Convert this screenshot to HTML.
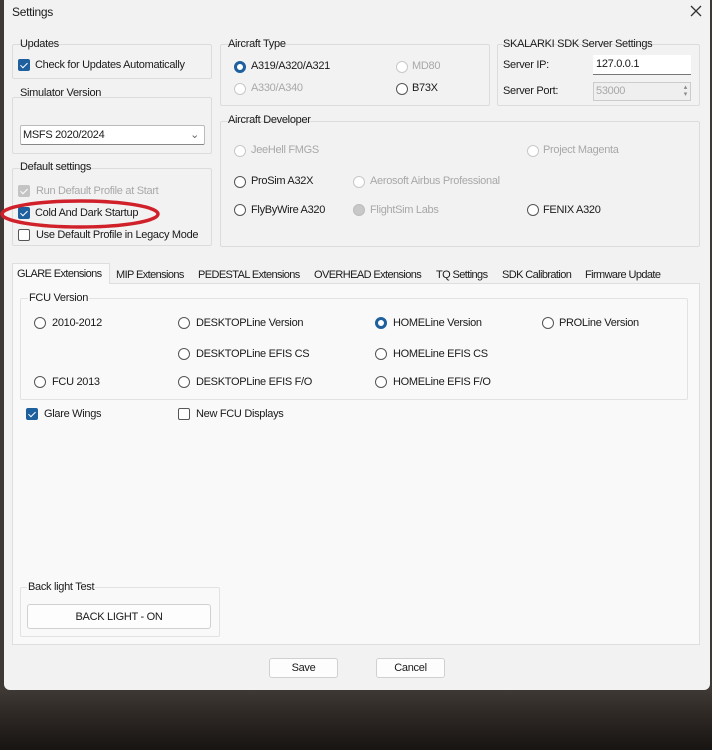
<!DOCTYPE html>
<html><head><meta charset="utf-8"><style>
*{margin:0;padding:0;box-sizing:border-box}
body{width:712px;height:750px;overflow:hidden;background:linear-gradient(180deg,#3f3935 690px,#2e2825 715px,#171412 750px);font-family:"Liberation Sans",sans-serif;font-size:11px;color:#1a1a1a;position:relative;letter-spacing:-0.3px}
.a{position:absolute;white-space:nowrap}
#dlg{position:absolute;left:4px;top:0;width:706px;height:690px;background:#f2f2f2;border-radius:0 0 6px 6px}
.g{position:absolute;border:1px solid #dcdcdc;border-radius:2px}
.dis{color:#a8a8a8}
.r{position:absolute;width:12px;height:12px;border:1px solid #555;border-radius:50%;background:#fff}
.r.on{border:3.5px solid #1e5f9e;background:#fff}
.r.d{border-color:#c8c8c8}
.r.dd{border-color:#bbb;background:#c8c8c8}
.c{position:absolute;width:12px;height:12px;border:1px solid #555;border-radius:2px;background:#fff}
.c.on{background:#1e5f9e;border-color:#1e5f9e}
.c.on::after,.c.gd::after{content:"";position:absolute;left:3px;top:0.5px;width:3px;height:6px;border:solid #fff;border-width:0 1.5px 1.5px 0;transform:rotate(45deg)}
.c.gd{background:#c4c4c4;border-color:#c4c4c4}
.btn{position:absolute;background:#fdfdfd;border:1px solid #d0d0d0;border-radius:3px;text-align:center}
.tab{letter-spacing:-0.6px}
</style></head><body>
<div id="dlg"></div>
<div class="a" style="left:12px;top:5px;font-size:12px">Settings</div>
<svg class="a" style="left:690px;top:5px" width="12" height="12"><path d="M1 1L11 11M11 1L1 11" stroke="#333" stroke-width="1.3"/></svg>

<div class="g" style="left:12px;top:44px;width:200px;height:35px"></div>
<div class="a" style="left:20px;top:38px">Updates</div>
<div class="c on" style="left:18px;top:59px"></div>
<div class="a" style="left:35px;top:59px">Check for Updates Automatically</div>

<div class="g" style="left:12px;top:97px;width:200px;height:57px"></div>
<div class="a" style="left:20px;top:87px">Simulator Version</div>
<div class="a" style="left:20px;top:125px;width:185px;height:20px;background:#fff;border:1px solid #bbb;border-bottom-color:#888;border-radius:2px;padding:3px 0 0 2px">MSFS 2020/2024<span style="position:absolute;right:5px;top:2px;color:#666">⌄</span></div>

<div class="g" style="left:12px;top:168px;width:200px;height:78px"></div>
<div class="a" style="left:20px;top:161px">Default settings</div>
<div class="c gd" style="left:18px;top:185px"></div>
<div class="a dis" style="left:36px;top:185px">Run Default Profile at Start</div>
<div class="c on" style="left:18px;top:207px"></div>
<div class="a" style="left:35px;top:207px">Cold And Dark Startup</div>
<div class="c" style="left:18px;top:229px"></div>
<div class="a" style="left:36px;top:229px">Use Default Profile in Legacy Mode</div>
<svg class="a" style="left:0;top:196px" width="170" height="40"><ellipse cx="80" cy="18" rx="78" ry="13" fill="none" stroke="#d0212b" stroke-width="3.5"/></svg>

<div class="g" style="left:220px;top:44px;width:270px;height:62px"></div>
<div class="a" style="left:228px;top:38px">Aircraft Type</div>
<div class="r on" style="left:234px;top:61px"></div><div class="a" style="left:251px;top:60px">A319/A320/A321</div>
<div class="r d" style="left:234px;top:83px"></div><div class="a dis" style="left:251px;top:82px">A330/A340</div>
<div class="r d" style="left:396px;top:61px"></div><div class="a dis" style="left:412px;top:60px">MD80</div>
<div class="r" style="left:396px;top:83px"></div><div class="a" style="left:412px;top:82px">B73X</div>

<div class="g" style="left:497px;top:44px;width:203px;height:62px"></div>
<div class="a" style="left:503px;top:38px">SKALARKI SDK Server Settings</div>
<div class="a" style="left:503px;top:59px">Server IP:</div>
<div class="a" style="left:593px;top:55px;width:98px;height:20px;background:#fff;border-bottom:1px solid #777;padding:3px 0 0 3px">127.0.0.1</div>
<div class="a" style="left:503px;top:85px">Server Port:</div>
<div class="a dis" style="left:593px;top:82px;width:98px;height:19px;background:#efefef;border:1px solid #ccc;padding:2px 0 0 2px">53000<span style="position:absolute;right:3px;top:1px;font-size:7px;line-height:7px;color:#888">▴<br>▾</span></div>

<div class="g" style="left:220px;top:121px;width:480px;height:126px"></div>
<div class="a" style="left:228px;top:114px">Aircraft Developer</div>
<div class="r d" style="left:234px;top:145px"></div><div class="a dis" style="left:251px;top:144px">JeeHell FMGS</div>
<div class="r d" style="left:527px;top:145px"></div><div class="a dis" style="left:543px;top:144px">Project Magenta</div>
<div class="r" style="left:234px;top:176px"></div><div class="a" style="left:251px;top:175px">ProSim A32X</div>
<div class="r d" style="left:353px;top:176px"></div><div class="a dis" style="left:370px;top:175px">Aerosoft Airbus Professional</div>
<div class="r" style="left:234px;top:204px"></div><div class="a" style="left:251px;top:204px">FlyByWire A320</div>
<div class="r dd" style="left:353px;top:204px"></div><div class="a dis" style="left:370px;top:204px">FlightSim Labs</div>
<div class="r" style="left:527px;top:204px"></div><div class="a" style="left:543px;top:204px">FENIX A320</div>

<div class="a" style="left:12px;top:283px;width:688px;height:362px;background:#f9f9f9;border:1px solid #dedede"></div>
<div class="a" style="left:12px;top:263px;width:98px;height:21px;background:#f9f9f9;border:1px solid #dedede;border-bottom:none"></div>
<div class="a tab" style="left:17px;top:268px">GLARE Extensions</div>
<div class="a tab" style="left:116px;top:269px">MIP Extensions</div>
<div class="a tab" style="left:198px;top:269px">PEDESTAL Extensions</div>
<div class="a tab" style="left:314px;top:269px">OVERHEAD Extensions</div>
<div class="a tab" style="left:436px;top:269px">TQ Settings</div>
<div class="a tab" style="left:502px;top:269px">SDK Calibration</div>
<div class="a tab" style="left:585px;top:269px">Firmware Update</div>

<div class="g" style="left:20px;top:298px;width:668px;height:102px;border-color:#e2e2e2"></div>
<div class="a" style="left:28px;top:292px;background:#f9f9f9;padding:0 1px">FCU Version</div>
<div class="r" style="left:34px;top:317px"></div><div class="a" style="left:52px;top:317px">2010-2012</div>
<div class="r" style="left:178px;top:317px"></div><div class="a" style="left:196px;top:317px">DESKTOPLine Version</div>
<div class="r on" style="left:375px;top:317px"></div><div class="a" style="left:393px;top:317px">HOMELine Version</div>
<div class="r" style="left:542px;top:317px"></div><div class="a" style="left:559px;top:317px">PROLine Version</div>
<div class="r" style="left:178px;top:348px"></div><div class="a" style="left:196px;top:348px">DESKTOPLine EFIS CS</div>
<div class="r" style="left:375px;top:348px"></div><div class="a" style="left:393px;top:348px">HOMELine EFIS CS</div>
<div class="r" style="left:34px;top:376px"></div><div class="a" style="left:52px;top:376px">FCU 2013</div>
<div class="r" style="left:178px;top:376px"></div><div class="a" style="left:196px;top:376px">DESKTOPLine EFIS F/O</div>
<div class="r" style="left:375px;top:376px"></div><div class="a" style="left:393px;top:376px">HOMELine EFIS F/O</div>
<div class="c on" style="left:26px;top:408px"></div><div class="a" style="left:44px;top:408px">Glare Wings</div>
<div class="c" style="left:178px;top:408px"></div><div class="a" style="left:196px;top:408px">New FCU Displays</div>

<div class="g" style="left:20px;top:587px;width:200px;height:50px;border-color:#e2e2e2"></div>
<div class="a" style="left:27px;top:581px;background:#f9f9f9;padding:0 1px">Back light Test</div>
<div class="btn" style="left:27px;top:604px;width:184px;height:25px;padding-top:6px">BACK LIGHT - ON</div>

<div class="btn" style="left:269px;top:658px;width:69px;height:20px;padding-top:3px">Save</div>
<div class="btn" style="left:376px;top:658px;width:69px;height:20px;padding-top:3px">Cancel</div>
</body></html>
